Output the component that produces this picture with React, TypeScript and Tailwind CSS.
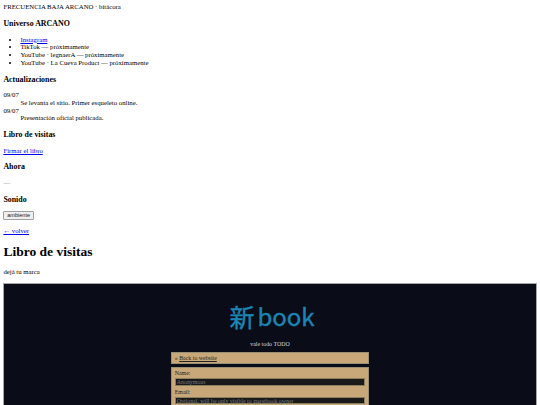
import React from 'react';

const App: React.FC = () => {
  return (
    <div className="h-[405px] overflow-hidden bg-white px-[3.4px] pt-[3.4px] text-[6.75px] leading-[7.75px] text-black font-['Liberation_Serif',serif]">
      <div>FRECUENCIA BAJA ARCANO · bitácora</div>

      <h3 className="mt-[8px] text-[7.9px] leading-[9px] font-bold">Universo ARCANO</h3>
      <ul className="mt-[7.5px] list-disc pl-[17px]">
        <li><a href="#" className="text-[#0000ee] underline">Instagram</a></li>
        <li>TikTok — próximamente</li>
        <li>YouTube · legnaerA — próximamente</li>
        <li>YouTube · La Cueva Product — próximamente</li>
      </ul>

      <h3 className="mt-[8px] text-[7.9px] leading-[9px] font-bold">Actualizaciones</h3>
      <dl className="mt-[7.5px]">
        <dt>09/07</dt>
        <dd className="ml-[17px]">Se levanta el sitio. Primer esqueleto online.</dd>
        <dt>09/07</dt>
        <dd className="ml-[17px]">Presentación oficial publicada.</dd>
      </dl>

      <h3 className="mt-[8px] text-[7.9px] leading-[9px] font-bold">Libro de visitas</h3>
      <p className="mt-[7.5px]"><a href="#" className="text-[#0000ee] underline">Firmar el libro</a></p>

      <h3 className="mt-[8px] text-[7.9px] leading-[9px] font-bold">Ahora</h3>
      <p className="mt-[7.5px] text-[#777777]">—</p>

      <h3 className="mt-[8px] text-[7.9px] leading-[9px] font-bold">Sonido</h3>
      <button className="mt-[7.5px] block h-[9px] w-[30.5px] rounded-[1px] border-[0.5px] border-[#a0a0a0] bg-[#efefef] text-center text-[5.6px] leading-[7px] text-[#222222] font-['Liberation_Sans',sans-serif]">ambiente</button>

      <p className="mt-[7px]"><a href="#" className="text-[#0000ee] underline">← volver</a></p>
      <h1 className="mt-[9px] text-[13.5px] leading-[15.5px] font-bold">Libro de visitas</h1>
      <p className="mt-[8.5px]">dejá tu marca</p>

      {/* embedded guestbook */}
      <div className="mt-[7.5px] h-[200px] border-[0.8px] border-[#a8a8a8] bg-[#0a0c18] text-[5.9px] leading-[7px]">
        <div className="flex flex-col items-center">
          <div className="ml-[4px] mt-[17px] flex items-center leading-[30px] text-[#1a86b4] [-webkit-text-stroke:0.4px_#1a86b4] font-['Noto_Sans_CJK_JP',sans-serif]">
            <span className="text-[25px]">新</span>
            <span className="ml-[3px] text-[24px]">book</span>
          </div>
          <div className="mt-[10px] text-[#d8d8d8]">vale todo TODO</div>
          <div className="mt-[3.5px] h-[12px] w-[198.5px] border-[0.8px] border-[#9a9078] bg-[#c8a878] px-[3px] leading-[10.5px] text-[#222222]">
            « <a href="#" className="underline">Back to website</a>
          </div>
          <div className="mt-[3.5px] h-[80px] w-[198.5px] border-[0.8px] border-[#9a9078] bg-[#c8a878] px-[3px] pt-[2px] text-[#222222]">
            <div>Name:</div>
            <div className="mt-[1px] h-[7.5px] border-[0.5px] border-[#8a8060] bg-[#1a1a1a] px-[1px] leading-[6.5px] text-[#777777]">Anonymous</div>
            <div className="mt-[3px]">Email:</div>
            <div className="mt-[1px] h-[7.5px] border-[0.5px] border-[#8a8060] bg-[#1a1a1a] px-[1px] leading-[6.5px] text-[#777777]">Optional, will be only visible to guestbook owner</div>
          </div>
        </div>
      </div>
    </div>
  );
};

export default App;
